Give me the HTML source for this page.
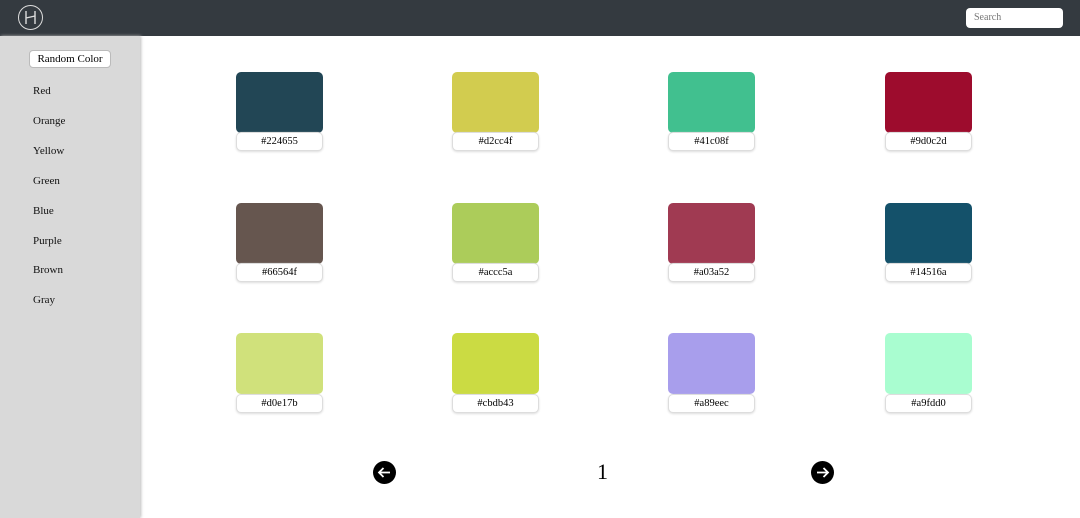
<html><head><style>
body{margin:0;width:1080px;height:518px;overflow:hidden;background:#fff;font-family:"Liberation Serif",serif;position:relative}
.hd{position:absolute;left:0;top:0;width:1080px;height:36px;background:#343a40}
.logo{position:absolute;left:18px;top:5px;width:23px;height:23px;border:1.5px solid #ddd;border-radius:50%}
.srch{position:absolute;left:966px;top:8px;width:97px;height:20px;background:#fff;border-radius:4px;font-size:10px;color:#777;line-height:20px;box-sizing:border-box;padding-left:8px}
.sb{position:absolute;left:0;top:36px;width:140px;height:482px;background:#d9d9d9;box-shadow:1px 0 3px #bbb}
.btn{position:absolute;left:29px;top:50px;width:82px;height:18px;background:#fff;border:1px solid #bbb;border-radius:4px;font-size:11px;text-align:center;line-height:17px;box-sizing:border-box}
.it{position:absolute;left:33px;font-size:11px;color:#111}
.sw{position:absolute;width:87px;height:61px;border-radius:5px}
.lb{position:absolute;width:87px;height:19px;border:1px solid #ddd;border-radius:5px;box-sizing:border-box;font-size:10.5px;text-align:center;line-height:18px;background:#fff;box-shadow:0 1px 2px #ddd}
.ar{position:absolute;width:23px;height:23px;border-radius:50%;background:#000;top:461px}
</style></head><body>
<div class="hd"><div class="logo"><svg width="23" height="23" viewBox="0 0 23 23"><path d="M7 5v13M16 5v13M7 12l9-2" stroke="#ddd" stroke-width="1.4" fill="none"/></svg></div><div class="srch">Search</div></div>
<div class="sb"></div>
<div class="btn">Random Color</div>
<div class="it" style="top:85px">Red</div>
<div class="it" style="top:115px">Orange</div>
<div class="it" style="top:145px">Yellow</div>
<div class="it" style="top:175px">Green</div>
<div class="it" style="top:205px">Blue</div>
<div class="it" style="top:235px">Purple</div>
<div class="it" style="top:264px">Brown</div>
<div class="it" style="top:294px">Gray</div>

<div class="sw" style="left:236px;top:72px;background:#224655"></div><div class="lb" style="left:236px;top:132px">#224655</div>
<div class="sw" style="left:452px;top:72px;background:#d2cc4f"></div><div class="lb" style="left:452px;top:132px">#d2cc4f</div>
<div class="sw" style="left:668px;top:72px;background:#41c08f"></div><div class="lb" style="left:668px;top:132px">#41c08f</div>
<div class="sw" style="left:885px;top:72px;background:#9d0c2d"></div><div class="lb" style="left:885px;top:132px">#9d0c2d</div>

<div class="sw" style="left:236px;top:203px;background:#66564f"></div><div class="lb" style="left:236px;top:263px">#66564f</div>
<div class="sw" style="left:452px;top:203px;background:#accc5a"></div><div class="lb" style="left:452px;top:263px">#accc5a</div>
<div class="sw" style="left:668px;top:203px;background:#a03a52"></div><div class="lb" style="left:668px;top:263px">#a03a52</div>
<div class="sw" style="left:885px;top:203px;background:#14516a"></div><div class="lb" style="left:885px;top:263px">#14516a</div>

<div class="sw" style="left:236px;top:333px;background:#d0e17b"></div><div class="lb" style="left:236px;top:394px">#d0e17b</div>
<div class="sw" style="left:452px;top:333px;background:#cbdb43"></div><div class="lb" style="left:452px;top:394px">#cbdb43</div>
<div class="sw" style="left:668px;top:333px;background:#a89eec"></div><div class="lb" style="left:668px;top:394px">#a89eec</div>
<div class="sw" style="left:885px;top:333px;background:#a9fdd0"></div><div class="lb" style="left:885px;top:394px">#a9fdd0</div>

<div class="ar" style="left:373px"><svg width="23" height="23"><path d="M17 11.5H6M10.5 7L6 11.5L10.5 16" stroke="#fff" stroke-width="1.8" fill="none"/></svg></div>
<div style="position:absolute;left:597px;top:459px;font-size:22px">1</div>
<div class="ar" style="left:811px"><svg width="23" height="23"><path d="M6 11.5H17M12.5 7L17 11.5L12.5 16" stroke="#fff" stroke-width="1.8" fill="none"/></svg></div>
</body></html>
